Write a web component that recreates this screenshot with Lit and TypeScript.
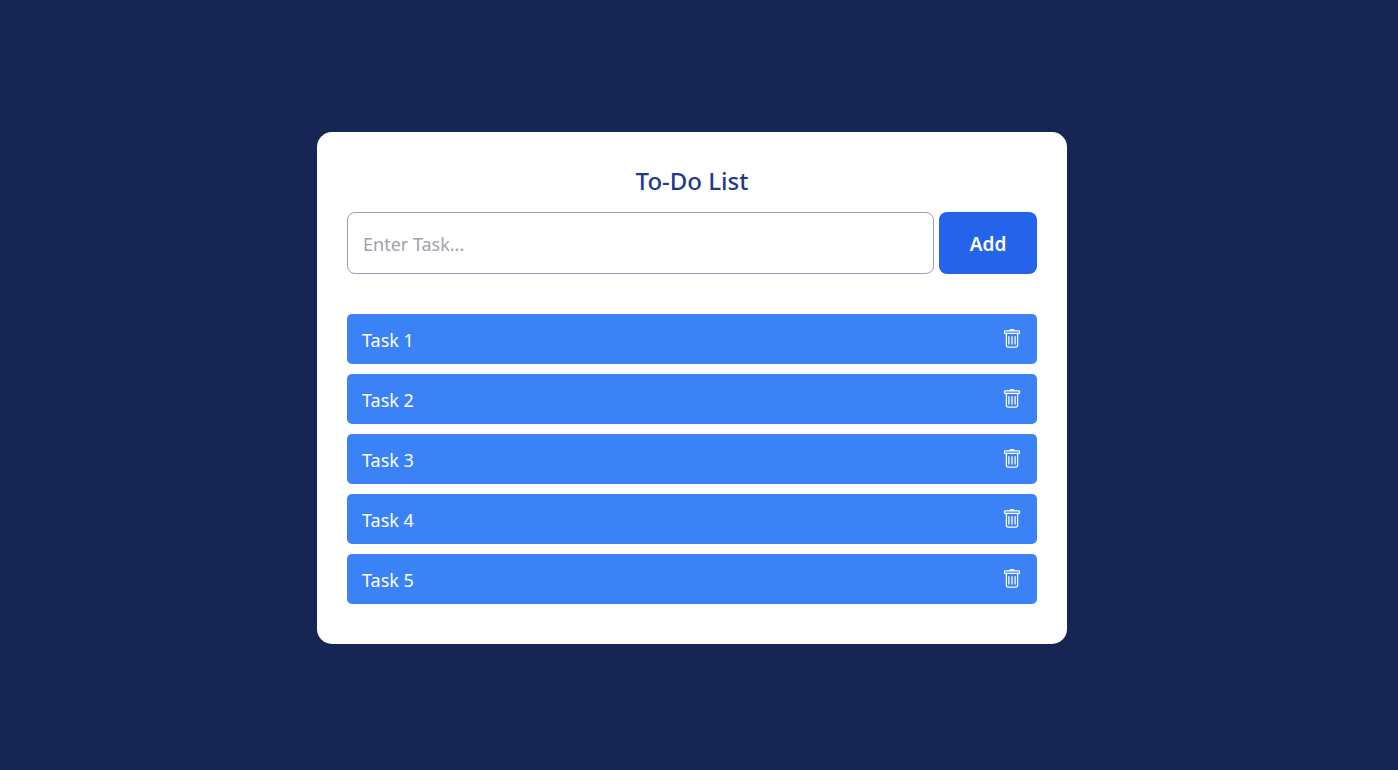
import { LitElement, html, css, svg } from "lit";
import { customElement, state } from "lit/decorators.js";

const trashIcon = svg`
  <path d="M5.5 5.5A.5.5 0 0 1 6 6v6a.5.5 0 0 1-1 0V6a.5.5 0 0 1 .5-.5m2.5 0a.5.5 0 0 1 .5.5v6a.5.5 0 0 1-1 0V6a.5.5 0 0 1 .5-.5m3 .5a.5.5 0 0 0-1 0v6a.5.5 0 0 0 1 0z"/>
  <path d="M14.5 3a1 1 0 0 1-1 1H13v9a2 2 0 0 1-2 2H5a2 2 0 0 1-2-2V4h-.5a1 1 0 0 1-1-1V2a1 1 0 0 1 1-1H6a1 1 0 0 1 1-1h2a1 1 0 0 1 1 1h3.5a1 1 0 0 1 1 1zM4.118 4 4 4.059V13a1 1 0 0 0 1 1h6a1 1 0 0 0 1-1V4.059L11.882 4zM2.5 3h11V2h-11z"/>`;

@customElement("app-root")
export class AppRoot extends LitElement {
  @state() private tasks = ["Task 1", "Task 2", "Task 3", "Task 4", "Task 5"];

  static styles = css`
    :host {
      display: block;
      box-sizing: border-box;
      min-height: 100vh;
      padding: 132px 14px 30px 0;
      background: #172554;
      font-family: "Noto Sans", "Open Sans", sans-serif;
      font-size: 18px;
      line-height: 20px;
    }
    .card {
      box-sizing: border-box;
      width: 100%;
      max-width: 750px;
      margin: 0 auto;
      padding: 30px 30px 40px;
      border-radius: 15px;
      background: #fff;
    }
    .title {
      margin: 0 0 12px;
      font-size: 24px;
      font-weight: 500;
      line-height: 38px;
      text-align: center;
      color: #1e3a8a;
    }
    .form {
      display: flex;
      gap: 5px;
      margin-bottom: 40px;
    }
    .input,
    .add {
      box-sizing: border-box;
      height: 62px;
      border-radius: 8px;
      font: inherit;
    }
    .input {
      flex: 1;
      min-width: 0;
      padding: 2px 15px 0;
      border: 1px solid #94a3b8;
      background: #fff;
      color: #172554;
    }
    .input::placeholder {
      color: #9ca3af;
      opacity: 1;
    }
    .add {
      min-width: 98px;
      padding: 2px 30px 0;
      border: 0;
      background: #2563eb;
      color: #fff;
      font-size: 19px;
      font-weight: 600;
      cursor: pointer;
    }
    .list {
      display: grid;
      gap: 10px;
      margin: 0;
      padding: 0;
      list-style: none;
    }
    .task {
      display: flex;
      align-items: center;
      justify-content: space-between;
      padding: 15px;
      border-radius: 5px;
      background: #3b82f6;
      color: #fff;
    }
    .name {
      line-height: 22px;
      margin-bottom: -2px;
    }
    .remove {
      display: flex;
      padding: 0;
      border: 0;
      background: none;
      color: inherit;
      cursor: pointer;
    }
  `;

  private add(event: Event) {
    event.preventDefault();
    const input = this.renderRoot.querySelector("input")!;
    const text = input.value.trim();
    if (!text) return;
    this.tasks = [...this.tasks, text];
    input.value = "";
  }

  private remove(index: number) {
    this.tasks = this.tasks.filter((_, i) => i !== index);
  }

  render() {
    return html`
      <main class="card">
        <h1 class="title">To-Do List</h1>
        <form class="form" @submit=${this.add}>
          <input class="input" type="text" placeholder="Enter Task..." aria-label="Enter Task..." />
          <button class="add" type="submit">Add</button>
        </form>
        <ul class="list">
          ${this.tasks.map(
            (task, i) => html`
              <li class="task">
                <span class="name">${task}</span>
                <button class="remove" type="button" aria-label="Delete ${task}" @click=${() => this.remove(i)}>
                  <svg width="20" height="20" viewBox="0 0 16 16" fill="currentColor" aria-hidden="true">${trashIcon}</svg>
                </button>
              </li>
            `
          )}
        </ul>
      </main>
    `;
  }
}
